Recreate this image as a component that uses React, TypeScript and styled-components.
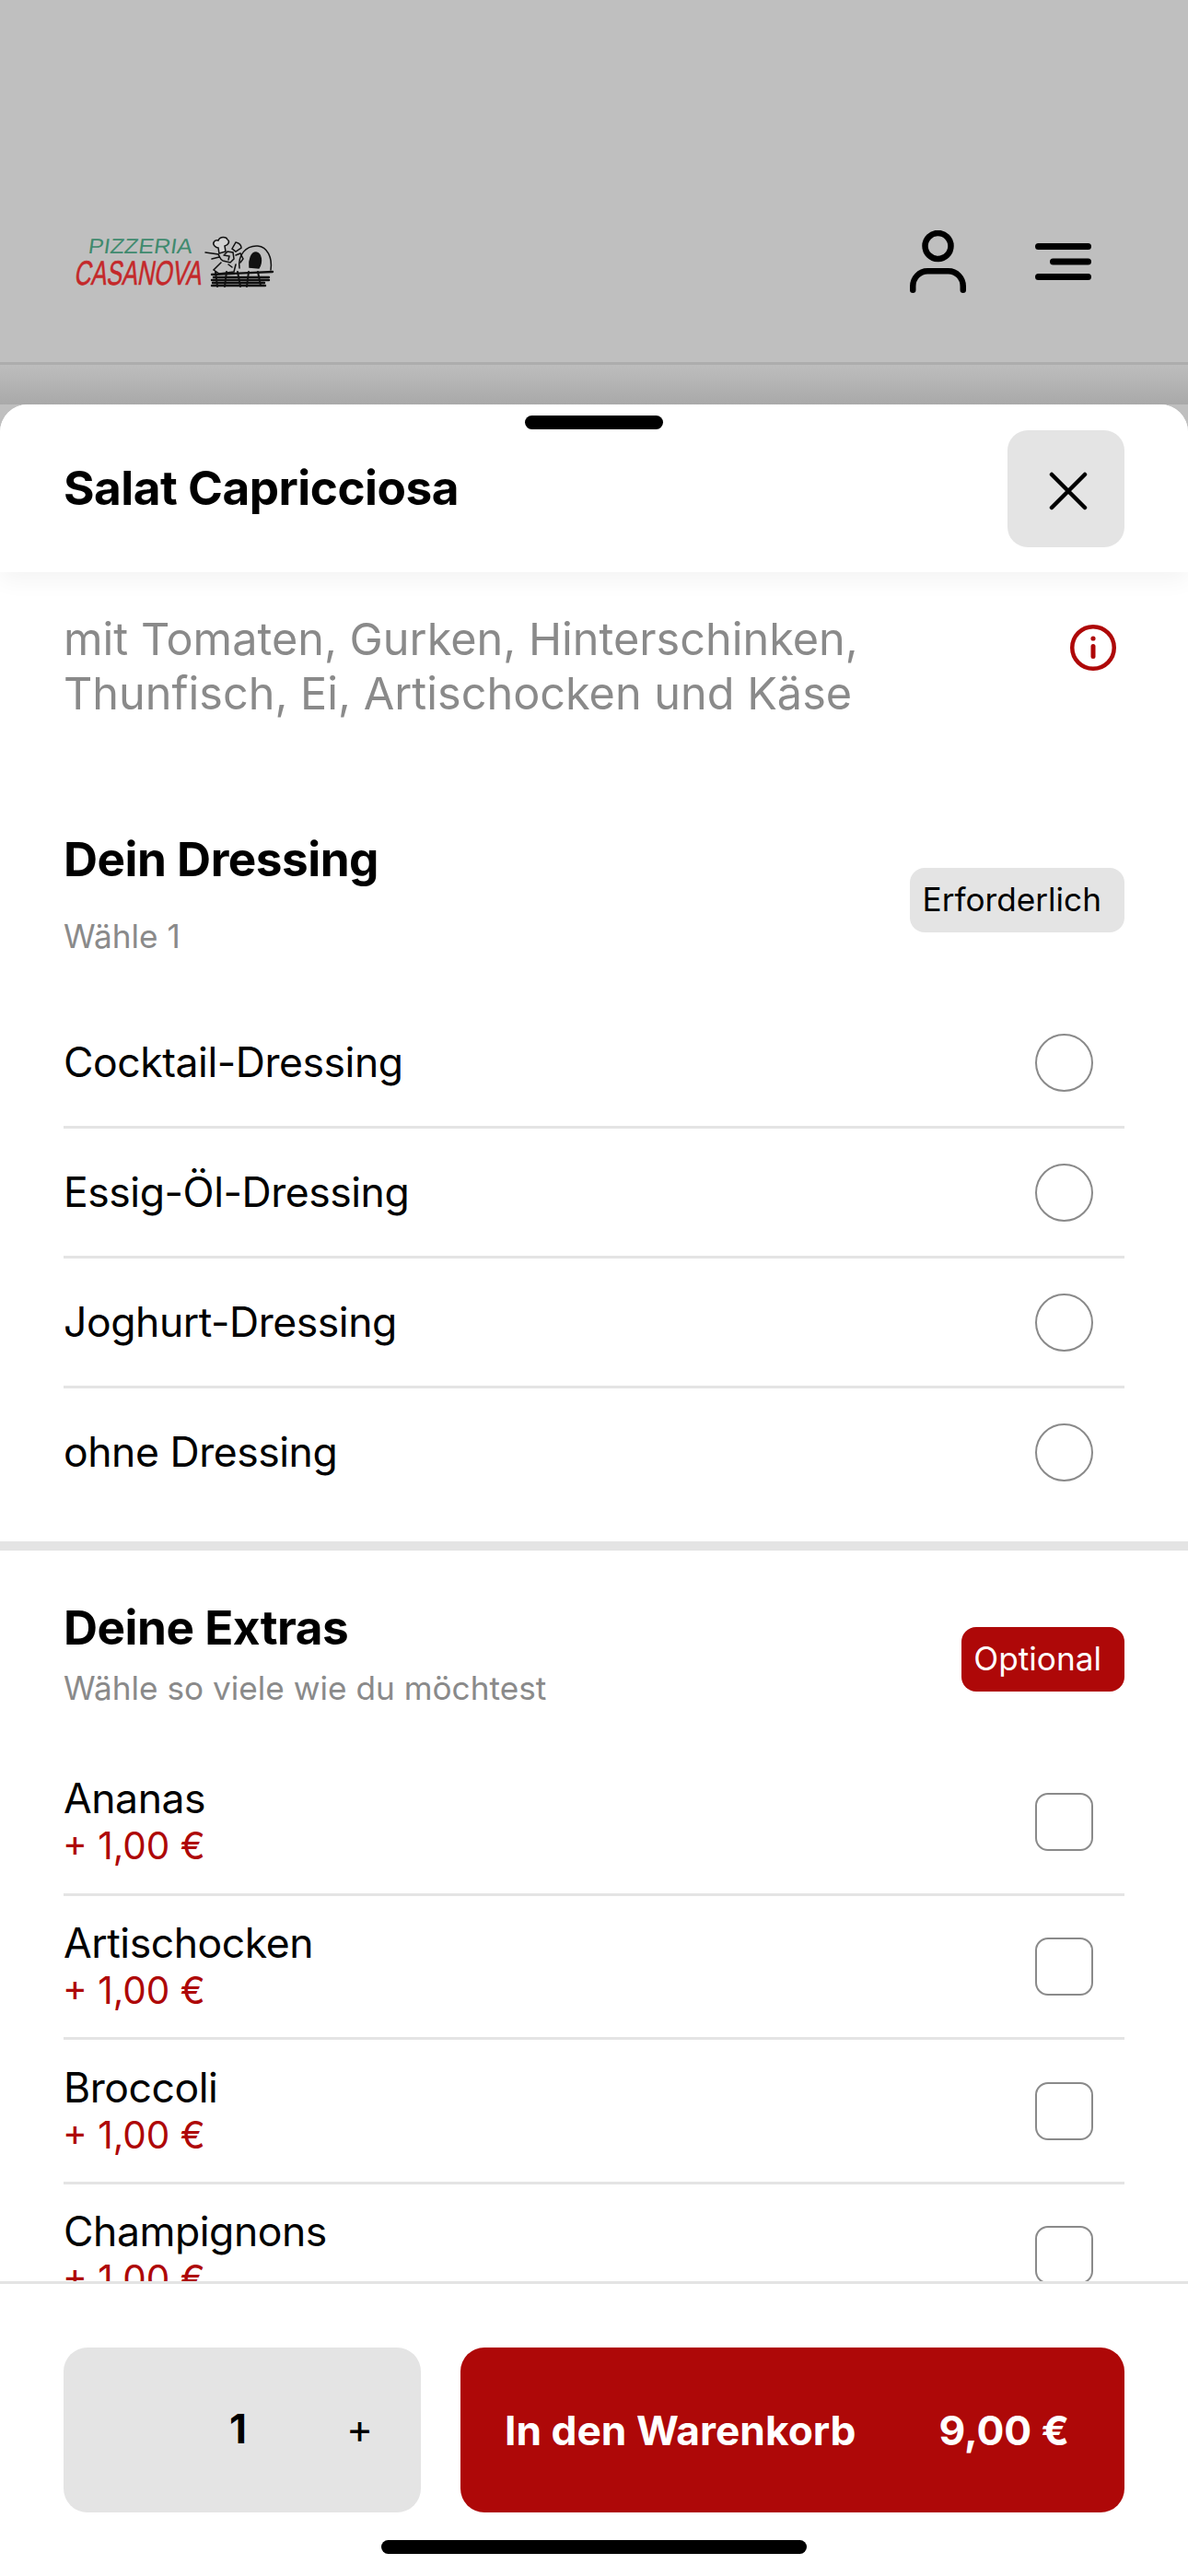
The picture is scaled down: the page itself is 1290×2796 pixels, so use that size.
import React from "react";
import styled, { createGlobalStyle } from "styled-components";

const Global = createGlobalStyle`
  html, body { margin: 0; padding: 0; background: #fff; }
  body { font-family: Inter, "Noto Sans", "Liberation Sans", sans-serif; color: #000; }
  * { box-sizing: border-box; }
`;

const Page = styled.div`
  width: 1290px; height: 2796px; overflow: hidden;
  display: flex; flex-direction: column; background: #bfbfbf;
`;
const TopBar = styled.header`
  height: 396px; flex: none; padding: 175px 105px 0 80px;
  display: flex; align-items: center; justify-content: space-between;
  border-bottom: 3px solid #adadad;
`;
const Logo = styled.svg`width: 220px; height: 58px; display: block; overflow: visible;`;
const TopIcons = styled.div`display: flex; align-items: center; gap: 75px;`;
const ShadeGap = styled.div`
  height: 43px; flex: none;
  background: linear-gradient(#bdbdbd, #a9a9a9);
`;
const Sheet = styled.section`
  flex: 1; min-height: 0; background: #fff;
  border-radius: 30px 30px 0 0; display: flex; flex-direction: column;
  position: relative; overflow: hidden;
`;
const Grabber = styled.div`
  position: absolute; z-index: 3; top: 12px; left: 570px; width: 150px; height: 15px;
  border-radius: 8px; background: #000;
`;
const SheetHeader = styled.div`
  height: 182px; flex: none; padding: 28px 69px 27px 69px;
  display: flex; align-items: center; justify-content: space-between;
  background: #fff; position: relative; z-index: 2;
  box-shadow: 0 8px 24px rgba(0,0,0,.05);
`;
const Title = styled.h1`
  margin: 0 0 3px; font-size: 51.3px; line-height: 60px; font-weight: 700; letter-spacing: -0.5px;
`;
const CloseButton = styled.button`
  width: 127px; height: 127px; border: 0; border-radius: 22px; background: #e4e4e4; padding: 4px 0 0 4px;
  display: flex; align-items: center; justify-content: center;
`;
const Scroll = styled.div`flex: 1; min-height: 0; overflow: hidden;`;
const Description = styled.div`
  padding: 43px 9px 0 69px; display: flex; justify-content: space-between; align-items: flex-start;
  margin-right: 69px; height: 239px;
`;
const DescText = styled.p`
  margin: 0; font-size: 48.6px; line-height: 59px; color: #8a8a8a; width: 960px;
`;
const InfoWrap = styled.div`margin: 14px 0 0 0;`;
const Section = styled.div<{ $divider?: boolean }>`
  padding: 0 69px 25px 69px;
  ${p => p.$divider ? "border-top: 10px solid #e4e4e4;" : ""}
`;
const SectionHead = styled.div<{ $h: number; $pt: number }>`
  height: ${p => p.$h}px; padding-top: ${p => p.$pt}px;
  display: flex; justify-content: space-between; align-items: flex-start;
`;
const SectionTitle = styled.h2`
  margin: 0; font-size: 51.3px; line-height: 60px; font-weight: 700; letter-spacing: -0.5px;
`;
const SectionSub = styled.div<{ $mt: number }>`
  margin-top: ${p => p.$mt}px; font-size: 35.2px; line-height: 42px; color: #8a8a8a;
`;
const Badge = styled.div<{ $accent?: boolean; $mt: number }>`
  margin-top: ${p => p.$mt}px;
  height: 70px; padding: 0 25px 3px 13px; border-radius: 16px; display: flex; align-items: center;
  font-size: 35.2px; white-space: nowrap;
  background: ${p => p.$accent ? "#ae0808" : "#e4e4e4"};
  color: ${p => p.$accent ? "#fff" : "#000"};
`;
const Row = styled.div<{ $h: number }>`
  height: ${p => p.$h}px; display: flex; align-items: center; justify-content: space-between;
  border-bottom: 3px solid #e4e4e4;
  &:last-child { border-bottom-color: transparent; }
`;
const RowLabel = styled.div`font-size: 44.5px; line-height: 50px; letter-spacing: -0.45px;`;
const RowPrice = styled.div`margin-top: 3px; font-size: 40.5px; line-height: 48px; color: #ae0808; margin-left: -1px;`;
const Radio = styled.div`
  width: 63px; height: 63px; border-radius: 50%; border: 2px solid #8a8a8a; margin-right: 34px;
`;
const Check = styled.div`
  width: 63px; height: 63px; border-radius: 14px; border: 2px solid #8a8a8a; margin-right: 34px;
`;
const Footer = styled.div`
  height: 320px; flex: none; background: #fff; border-top: 3px solid #e4e4e4;
  padding: 69px 69px 0; display: flex; gap: 43px; align-items: flex-start; position: relative;
`;
const Qty = styled.div`
  width: 388px; height: 179px; border-radius: 26px; background: #e4e4e4;
  display: flex; align-items: center; padding-left: 180px;
`;
const QtyNum = styled.span`font-size: 44px; font-weight: 700; width: 127px; margin-bottom: 3px;`;
const QtyPlus = styled.span`font-size: 44px; font-weight: 400; margin-bottom: 4px;`;
const CartButton = styled.button`
  flex: 1; height: 179px; border: 0; border-radius: 26px; background: #ae0808; color: #fff;
  display: flex; align-items: center; justify-content: space-between; padding: 0 60px 0 48px;
  font-family: inherit; font-size: 44.3px; font-weight: 700;
`;
const HomeBar = styled.div`
  position: absolute; left: 414px; bottom: 24px; width: 462px; height: 15px; border-radius: 8px; background: #000;
`;

const dressings = ["Cocktail-Dressing", "Essig-Öl-Dressing", "Joghurt-Dressing", "ohne Dressing"];
const extras = ["Ananas", "Artischocken", "Broccoli", "Champignons"];

export default function App() {
  return (
    <Page>
      <Global />
      <TopBar>
        <Logo viewBox="0 0 220 58" aria-label="Pizzeria Casanova">
          <text x="0" y="0" transform="translate(15 19.500) skewX(-8)" fontFamily="Liberation Sans, sans-serif" fontSize="23" fill="#3f8a6e" textLength="113" lengthAdjust="spacingAndGlyphs">PIZZERIA</text>
          <text x="0" y="0" transform="translate(0 53.500) skewX(-10)" fontFamily="Liberation Sans, sans-serif" fontSize="37" fill="#c4282a" stroke="#c4282a" strokeWidth="0.6" textLength="138" lengthAdjust="spacingAndGlyphs">CASANOVA</text>
          <g fill="none" stroke="#111" strokeWidth="1.5" strokeLinecap="round">
            <path d="M153 12c-3-3 0-7 4-6 2-5 9-4 10-1 3 2 1 6-3 7l1 6-7 2-1-6c-2 0-3-1-4-2z" fill="#d4d4d4" />
            <path d="M143 19l14 2c2 3 2 6 5 7l8 2 4-4-1-7-6-1-3 3M150 26l8-2M160 30l-8 8 6 4 16-2 2-8" />
            <path d="M163 22l6 1-1 4M168 32l4 3M176 22l5-2 3 6-3 4" />
            <path d="M180 36c-2-14 7-25 20-24 10 1 16 12 14 26" />
            <path d="M198 19c6 1 7 10 3 17l-10-1c-1-8 2-16 7-16z" fill="#111" />
            <path d="M176 8c4 1 6 3 6 6l-6 4-4-3z" />
            <path d="M150 43l66-3M152 46h60M150 49h62M151 52h56M150 55h58" strokeWidth="2.400" />
            <path d="M154 40l2 16M166 40l-2 16M178 40l3 16M190 40l-2 16M200 40l3 15" strokeWidth="2" />
          </g>
        </Logo>
        <TopIcons>
          <svg width="61" height="68" viewBox="0 0 61 68" fill="none" stroke="#000" strokeWidth="6.500" strokeLinecap="round">
            <circle cx="30.500" cy="17" r="14" />
            <path d="M3.250 64.750v-4c0-9 7-16.500 16-16.500h22.500c9 0 16 7.500 16 16.500v4" />
          </svg>
          <svg width="61" height="40" viewBox="0 0 61 40" fill="none" stroke="#000" strokeWidth="7" strokeLinecap="round">
            <path d="M3.500 3.500h54M19.500 20h38M3.500 36.500h54" />
          </svg>
        </TopIcons>
      </TopBar>
      <ShadeGap />
      <Sheet>
        <Grabber />
        <SheetHeader>
          <Title>Salat Capricciosa</Title>
          <CloseButton aria-label="Schließen">
            <svg width="42" height="42" viewBox="0 0 42 42" stroke="#000" strokeWidth="4.500" strokeLinecap="round">
              <path d="M3 3l36 36M39 3L3 39" />
            </svg>
          </CloseButton>
        </SheetHeader>
        <Scroll>
          <Description>
            <DescText>mit Tomaten, Gurken, Hinterschinken, Thunfisch, Ei, Artischocken und Käse</DescText>
            <InfoWrap>
              <svg width="50" height="50" viewBox="0 0 50 50" fill="none" stroke="#ae0808" strokeWidth="4.500" strokeLinecap="round">
                <circle cx="25" cy="25" r="22.750" />
                <path d="M25 23.500v11" strokeWidth="5" />
                <circle cx="25" cy="15" r="2.600" fill="#ae0808" stroke="none" />
              </svg>
            </InfoWrap>
          </Description>
          <Section>
            <SectionHead $h={224} $pt={42}>
              <div>
                <SectionTitle>Dein Dressing</SectionTitle>
                <SectionSub $mt={33}>Wähle 1</SectionSub>
              </div>
              <Badge $mt={40}>Erforderlich</Badge>
            </SectionHead>
            {dressings.map(d => (
              <Row key={d} $h={141}>
                <RowLabel>{d}</RowLabel>
                <Radio />
              </Row>
            ))}
          </Section>
          <Section $divider>
            <SectionHead $h={218} $pt={53}>
              <div>
                <SectionTitle>Deine Extras</SectionTitle>
                <SectionSub $mt={15}>Wähle so viele wie du möchtest</SectionSub>
              </div>
              <Badge $accent $mt={30}>Optional</Badge>
            </SectionHead>
            {extras.map(e => (
              <Row key={e} $h={156.7}>
                <div>
                  <RowLabel>{e}</RowLabel>
                  <RowPrice>+ 1,00 €</RowPrice>
                </div>
                <Check />
              </Row>
            ))}
          </Section>
        </Scroll>
        <Footer>
          <Qty>
            <QtyNum>1</QtyNum>
            <QtyPlus>+</QtyPlus>
          </Qty>
          <CartButton>
            <span>In den Warenkorb</span>
            <span>9,00 €</span>
          </CartButton>
          <HomeBar />
        </Footer>
      </Sheet>
    </Page>
  );
}
